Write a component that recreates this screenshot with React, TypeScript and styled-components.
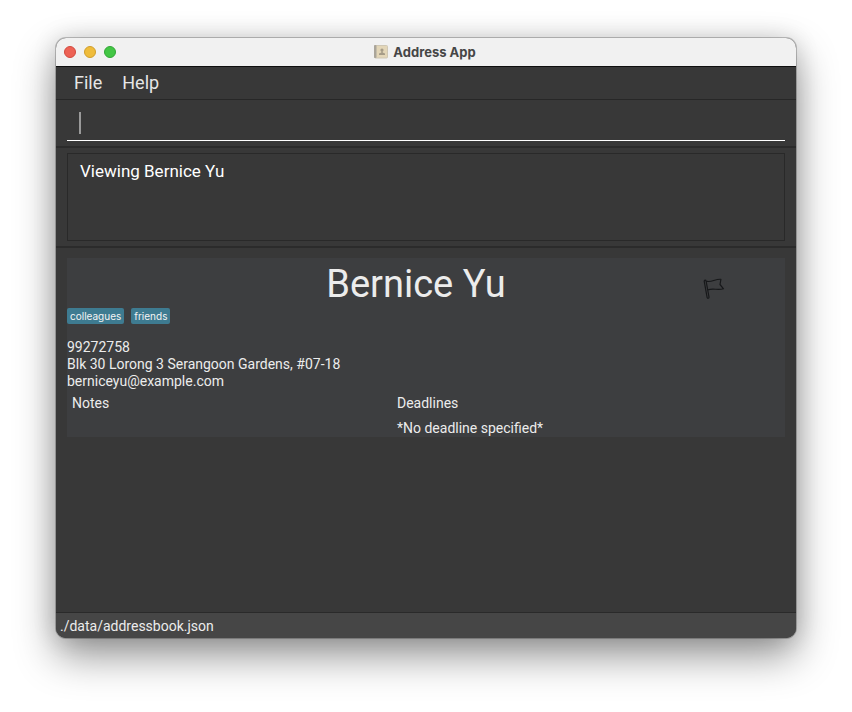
import React from "react";
import styled, { createGlobalStyle } from "styled-components";

const GlobalStyle = createGlobalStyle`
  *, *::before, *::after { box-sizing: border-box; }
  body {
    margin: 0;
    background: #fff;
    font-family: Roboto, "Liberation Sans", sans-serif;
    color: #ececec;
  }
`;

const Desktop = styled.div`
  display: flex;
  min-height: 100vh;
  padding: 38px 56px 74px;
`;

const Window = styled.main`
  flex: 1;
  min-width: 0;
  display: flex;
  flex-direction: column;
  overflow: hidden;
  border-radius: 10px;
  background: #383838;
  box-shadow: 0 0 0 1px rgba(0, 0, 0, 0.22), 0 18px 40px rgba(0, 0, 0, 0.42),
    0 0 24px rgba(0, 0, 0, 0.14);
`;

const TitleBar = styled.header`
  position: relative;
  display: flex;
  align-items: center;
  justify-content: center;
  height: 29px;
  padding-right: 2px;
  background: #f1f1f1;
  border-bottom: 1px solid #0f0f0f;
`;

const WindowControls = styled.div`
  position: absolute;
  left: 8px;
  top: 8px;
  display: flex;
  gap: 8px;
`;

const ControlDot = styled.button<{ $fill: string; $edge: string }>`
  width: 12px;
  height: 12px;
  padding: 0;
  border: 1px solid ${(p) => p.$edge};
  border-radius: 50%;
  background: ${(p) => p.$fill};
`;

const Title = styled.h1`
  display: flex;
  align-items: center;
  gap: 5px;
  margin: 0;
  font-family: Inter, "Liberation Sans", sans-serif;
  font-size: 13px;
  line-height: 16px;
  font-weight: 700;
  color: #464646;
`;

const MenuBar = styled.nav`
  display: flex;
  gap: 20px;
  height: 33px;
  padding: 0 18px;
  border-bottom: 1px solid #272727;
`;

const MenuButton = styled.button`
  padding: 0;
  border: 0;
  background: none;
  font: inherit;
  font-size: 18px;
  line-height: 32px;
  color: #e6e6e6;
`;

const CommandPane = styled.section`
  position: relative;
  padding: 5px 11px;
  border-bottom: 2px solid #2b2b2b;
`;

const CommandInput = styled.input`
  display: block;
  width: 100%;
  height: 36px;
  padding: 0 12px;
  border: 0;
  border-bottom: 1px solid #fff;
  border-radius: 0;
  outline: none;
  background: transparent;
  caret-color: transparent;
  font: inherit;
  font-size: 18px;
  color: #fff;
`;

const Caret = styled.span`
  position: absolute;
  left: 23px;
  top: 12px;
  width: 2px;
  height: 22px;
  background: #9a9a9a;
`;

const ResultPane = styled.section`
  padding: 5px 11px;
  border-bottom: 2px solid #2b2b2b;
`;

const ResultText = styled.textarea`
  display: block;
  width: 100%;
  height: 88px;
  padding: 7px 12px;
  border: 1px solid #292929;
  border-radius: 0;
  outline: none;
  resize: none;
  background: transparent;
  font: inherit;
  font-size: 17px;
  line-height: 20px;
  color: #fff;
`;

const Content = styled.section`
  flex: 1;
  padding: 10px 11px;
`;

const Card = styled.article`
  background: #3d3e40;
  font-size: 14px;
  line-height: 17px;
`;

const CardHeader = styled.div`
  display: grid;
  grid-template-columns: 1fr auto 1fr;
  align-items: center;
  height: 50px;
  padding: 2px 20px 0 0;
`;

const Name = styled.h2`
  grid-column: 2;
  margin: 0;
  font-size: 38px;
  line-height: 48px;
  font-weight: 400;
`;

const FlagButton = styled.button`
  justify-self: end;
  display: flex;
  margin: 10px 40px 0 0;
  padding: 0;
  border: 0;
  background: none;
`;

const Tags = styled.ul`
  display: flex;
  gap: 7px;
  margin: 0 0 15px;
  padding: 0;
  list-style: none;
`;

const Tag = styled.li`
  padding: 0 3px;
  border-radius: 2px;
  background: #3e7b91;
  font-family: Inter, "Liberation Sans", sans-serif;
  font-size: 10px;
  line-height: 16px;
  color: #f4f4f4;
`;

const Line = styled.p`
  margin: 0;
`;

const Columns = styled.div`
  display: grid;
  grid-template-columns: 325px 1fr;
  padding: 5px 5px 0;
`;

const Column = styled.div`
  display: flex;
  flex-direction: column;
  gap: 8px;
`;

const ColumnTitle = styled.h3`
  margin: 0;
  font: inherit;
`;

const StatusBar = styled.footer`
  height: 26px;
  padding: 0 4px;
  border-top: 1px solid #2a2a2a;
  background: #464646;
  font-size: 14px;
  line-height: 26px;
`;

const AddressBookIcon = () => (
  <svg width="14" height="14" viewBox="0 0 14 14" aria-hidden="true">
    <rect x="0.5" y="0.5" width="13" height="12.5" rx="1" fill="#e3d6b8" stroke="#cfc7b4" />
    <rect x="0" y="0" width="2.5" height="13" rx="1" fill="#aaa59a" />
    <circle cx="8" cy="5" r="1.6" fill="#a69c88" />
    <path d="M7.3 6h1.4v1.6L11 8.6V10H5V8.6l2.3-1z" fill="#a69c88" />
  </svg>
);

const FlagIcon = () => (
  <svg width="22" height="22" viewBox="0 0 22 22" fill="none" stroke="#17181a" aria-hidden="true">
    <path
      d="M1.2 3.2C1.2 1.8 2.9 1.9 3.1 3.1L6 19c.2 1.5-1.6 1.8-1.9.3L1.2 3.2zM3.1 3.1C8 5 12 .8 17.9 1.3L17 6.5l3.5 4.3C14.5 12.7 10 9.7 4.7 12"
      strokeWidth="1.2"
      strokeLinejoin="round"
    />
  </svg>
);

const controls = [
  { label: "Close", fill: "#ed6255", edge: "#d2493e" },
  { label: "Minimize", fill: "#efbc3b", edge: "#d09e2b" },
  { label: "Zoom", fill: "#43c645", edge: "#32a636" },
];

const person = {
  name: "Bernice Yu",
  tags: ["colleagues", "friends"],
  phone: "99272758",
  address: "Blk 30 Lorong 3 Serangoon Gardens, #07-18",
  email: "berniceyu@example.com",
};

export default function App() {
  return (
    <>
      <GlobalStyle />
      <Desktop>
        <Window>
          <TitleBar>
            <WindowControls>
              {controls.map((c) => (
                <ControlDot key={c.label} aria-label={c.label} $fill={c.fill} $edge={c.edge} />
              ))}
            </WindowControls>
            <Title>
              <AddressBookIcon />
              Address App
            </Title>
          </TitleBar>
          <MenuBar>
            <MenuButton>File</MenuButton>
            <MenuButton>Help</MenuButton>
          </MenuBar>
          <CommandPane>
            <CommandInput type="text" aria-label="Command" />
            <Caret />
          </CommandPane>
          <ResultPane>
            <ResultText aria-label="Result" readOnly value={`Viewing ${person.name}`} />
          </ResultPane>
          <Content>
            <Card>
              <CardHeader>
                <Name>{person.name}</Name>
                <FlagButton aria-label="Flag">
                  <FlagIcon />
                </FlagButton>
              </CardHeader>
              <Tags>
                {person.tags.map((tag) => (
                  <Tag key={tag}>{tag}</Tag>
                ))}
              </Tags>
              <Line>{person.phone}</Line>
              <Line>{person.address}</Line>
              <Line>{person.email}</Line>
              <Columns>
                <Column>
                  <ColumnTitle>Notes</ColumnTitle>
                </Column>
                <Column>
                  <ColumnTitle>Deadlines</ColumnTitle>
                  <Line>*No deadline specified*</Line>
                </Column>
              </Columns>
            </Card>
          </Content>
          <StatusBar>./data/addressbook.json</StatusBar>
        </Window>
      </Desktop>
    </>
  );
}
